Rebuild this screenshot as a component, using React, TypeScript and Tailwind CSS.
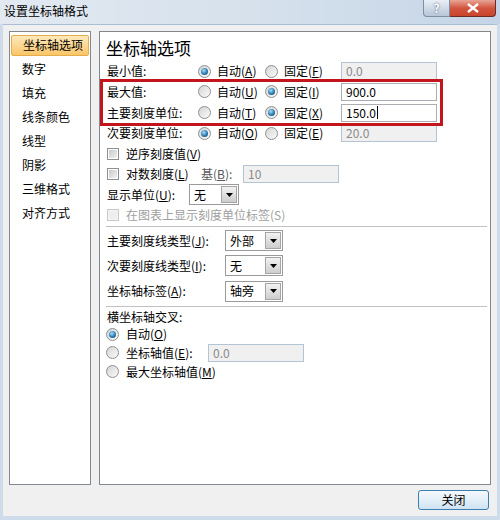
import React from "react";

const font = "font-['Noto_Sans_CJK_SC','Liberation_Sans',sans-serif]";

function Radio({ checked }: { checked?: boolean }) {
  return (
    <span className="w-[13px] h-[13px] rounded-full border border-[#8e8f8f] bg-[linear-gradient(135deg,#d4d4d4,#fbfbfb)] flex items-center justify-center shrink-0">
      {checked && (
        <span className="w-[7px] h-[7px] rounded-full bg-[radial-gradient(circle_at_40%_35%,#a6e0fa,#2a7bb0_55%,#103e60)]" />
      )}
    </span>
  );
}

function Check({ disabled }: { disabled?: boolean }) {
  return (
    <span
      className={`w-[12px] h-[12px] border flex items-center justify-center shrink-0 ${
        disabled ? "border-[#c8c8c8] bg-[#f4f4f4]" : "border-[#8e8f8f] bg-white"
      }`}
    >
      <span
        className={`w-[8px] h-[8px] ${
          disabled ? "bg-[#eeeeee]" : "bg-[linear-gradient(135deg,#c9c9c9,#f2f2f2)]"
        }`}
      />
    </span>
  );
}

function Input({
  value,
  disabled,
  caret,
  w = "w-[96px]",
}: {
  value: string;
  disabled?: boolean;
  caret?: boolean;
  w?: string;
}) {
  return (
    <div
      className={`${w} h-[18px] border flex items-center pl-[4px] text-[12px] ${
        disabled ? "border-[#b5c4d4] bg-[#f0f0f0] text-[#8a8a8a]" : "border-[#abadb3] bg-white text-black"
      }`}
    >
      {value}
      {caret && <span className="ml-[1px] w-px h-[13px] bg-black" />}
    </div>
  );
}

function Select({ value, w }: { value: string; w: string }) {
  return (
    <div className={`${w} h-[21px] border border-[#9a9a9a] bg-white flex items-center`}>
      <span className="flex-1 pl-[4px] text-[12px]">{value}</span>
      <span className="w-[16px] h-[17px] mr-[1px] border border-[#a5a5a5] bg-gradient-to-b from-[#f3f3f3] to-[#cdcdcd] flex items-center justify-center">
        <svg width="7" height="4" viewBox="0 0 7 4">
          <path d="M0 0h7L3.5 4z" fill="#000" />
        </svg>
      </span>
    </div>
  );
}

function Opt({ label, k, checked }: { label: string; k: string; checked?: boolean }) {
  return (
    <span className="flex items-center gap-[6px]">
      <Radio checked={checked} />
      <span>
        {label}(<u>{k}</u>)
      </span>
    </span>
  );
}

function ScaleRow({
  label,
  h,
  auto,
  k1,
  k2,
  value,
  caret,
}: {
  label: string;
  h: string;
  auto: boolean;
  k1: string;
  k2: string;
  value: string;
  caret?: boolean;
}) {
  return (
    <div className={`${h} flex items-center pl-[7px]`}>
      <span className="w-[91px]">{label}:</span>
      <span className="w-[67px]">
        <Opt label="自动" k={k1} checked={auto} />
      </span>
      <span className="w-[76px]">
        <Opt label="固定" k={k2} checked={!auto} />
      </span>
      <Input value={value} disabled={auto} caret={caret} />
    </div>
  );
}

const menu = ["坐标轴选项", "数字", "填充", "线条颜色", "线型", "阴影", "三维格式", "对齐方式"];

export default function App() {
  return (
    <div className={`w-[500px] h-[520px] flex flex-col bg-[#cddbeb] text-black text-[12px] ${font}`}>
      <div className="h-[24px] flex items-start bg-gradient-to-r from-[#e2e9f1] via-[#d6e1ec] to-[#c5d5e7]">
        <span className="pl-[4px] pt-[3px] text-[12px] leading-[16px]">设置坐标轴格式</span>
        <div className="ml-auto mr-[4px] flex">
          <div className="w-[27px] h-[17px] rounded-bl-[4px] border border-[#7d8fa5] border-t-0 bg-gradient-to-b from-[#e9eff6] to-[#b7c6d8] flex items-center justify-center text-[12px] font-bold text-white [text-shadow:0_0_2px_#3c4c60]">
            ?
          </div>
          <div className="w-[46px] h-[17px] rounded-br-[4px] border border-[#6e2b24] border-t-0 border-l-0 bg-gradient-to-b from-[#e8a597] via-[#d2553f] to-[#c8452c] flex items-center justify-center">
            <svg width="12" height="10" viewBox="0 0 12 10">
              <path d="M1 1l10 8M11 1L1 9" stroke="#fff" strokeWidth="2.4" />
            </svg>
          </div>
        </div>
      </div>

      <div className="mx-[3px] h-[492px] bg-[#f0f0f0] border-t border-[#a9bdd3] flex flex-col px-[6px] pt-[6px]">
        <div className="flex gap-[8px] h-[454px]">
          <div className="w-[82px] h-full bg-white border border-[#828790] pt-[1px]">
            {menu.map((m, i) => (
              <div key={m} className="h-[24px] flex items-center">
                {i === 0 ? (
                  <div className="mx-[1px] w-full h-[21px] rounded-[2px] border border-[#e5ac4c] bg-gradient-to-b from-[#fde9bb] to-[#f9c567] flex items-center pl-[11px]">
                    {m}
                  </div>
                ) : (
                  <span className="pl-[12px]">{m}</span>
                )}
              </div>
            ))}
          </div>

          <div className="relative w-[392px] h-full bg-white border border-[#828790] flex flex-col">
            <div className="h-[29px] pt-[3px] pl-[6px] flex items-center text-[17px]">坐标轴选项</div>
            <ScaleRow label="最小值" h="h-[20px]" auto k1="A" k2="F" value="0.0" />
            <ScaleRow label="最大值" h="h-[21px]" auto={false} k1="U" k2="I" value="900.0" />
            <ScaleRow label="主要刻度单位" h="h-[21px]" auto={false} k1="T" k2="X" value="150.0" caret />
            <ScaleRow label="次要刻度单位" h="h-[20px]" auto k1="O" k2="E" value="20.0" />

            <div className="h-[21px] flex items-center pl-[7px] gap-[7px]">
              <Check />
              <span>
                逆序刻度值(<u>V</u>)
              </span>
            </div>
            <div className="h-[20px] flex items-center pl-[7px]">
              <Check />
              <span className="w-[82px] pl-[7px]">
                对数刻度(<u>L</u>)
              </span>
              <span className="w-[42px] text-[#5a5a5a]">
                基(<u>B</u>):
              </span>
              <Input value="10" disabled />
            </div>
            <div className="h-[21px] flex items-center pl-[7px]">
              <span className="w-[82px]">
                显示单位(<u>U</u>):
              </span>
              <Select value="无" w="w-[50px]" />
            </div>
            <div className="h-[20px] flex items-center pl-[7px] gap-[7px] text-[#a0a0a0]">
              <Check disabled />
              <span>在图表上显示刻度单位标签(S)</span>
            </div>

            <div className="h-[3px] pt-[1px] ml-[6px] mr-[3px]">
              <div className="h-[2px] border-t border-[#c2c2c2] border-b border-b-white" />
            </div>

            <div className="h-[25px] flex items-center pl-[7px]">
              <span className="w-[118px]">
                主要刻度线类型(<u>J</u>):
              </span>
              <Select value="外部" w="w-[58px]" />
            </div>
            <div className="h-[25px] flex items-center pl-[7px]">
              <span className="w-[118px]">
                次要刻度线类型(<u>I</u>):
              </span>
              <Select value="无" w="w-[58px]" />
            </div>
            <div className="h-[26px] flex items-center pl-[7px]">
              <span className="w-[118px]">
                坐标轴标签(<u>A</u>):
              </span>
              <Select value="轴旁" w="w-[58px]" />
            </div>

            <div className="h-[4px] pt-[2px] ml-[6px] mr-[3px]">
              <div className="h-[2px] border-t border-[#c2c2c2] border-b border-b-white" />
            </div>

            <div className="h-[17px] flex items-center pl-[7px]">横坐标轴交叉:</div>
            <div className="h-[18px] flex items-center pl-[6px] gap-[7px]">
              <Radio checked />
              <span>
                自动(<u>O</u>)
              </span>
            </div>
            <div className="h-[19px] flex items-center pl-[6px]">
              <Radio />
              <span className="w-[89px] pl-[7px]">
                坐标轴值(<u>E</u>):
              </span>
              <Input value="0.0" disabled />
            </div>
            <div className="h-[19px] flex items-center pl-[6px] gap-[7px]">
              <Radio />
              <span>
                最大坐标轴值(<u>M</u>)
              </span>
            </div>

            <div className="absolute left-[0px] top-[47px] w-[343px] h-[47px] border-[3px] border-[#c3161c]" />
          </div>
        </div>

        <div className="flex justify-end pr-[2px] mt-[5px]">
          <button className="w-[71px] h-[20px] rounded-[3px] border border-[#3c7fb1] bg-gradient-to-b from-[#f4f9fd] via-[#e4eff8] to-[#cfe3f3] text-[12px] flex items-center justify-center">
            关闭
          </button>
        </div>
      </div>
    </div>
  );
}
